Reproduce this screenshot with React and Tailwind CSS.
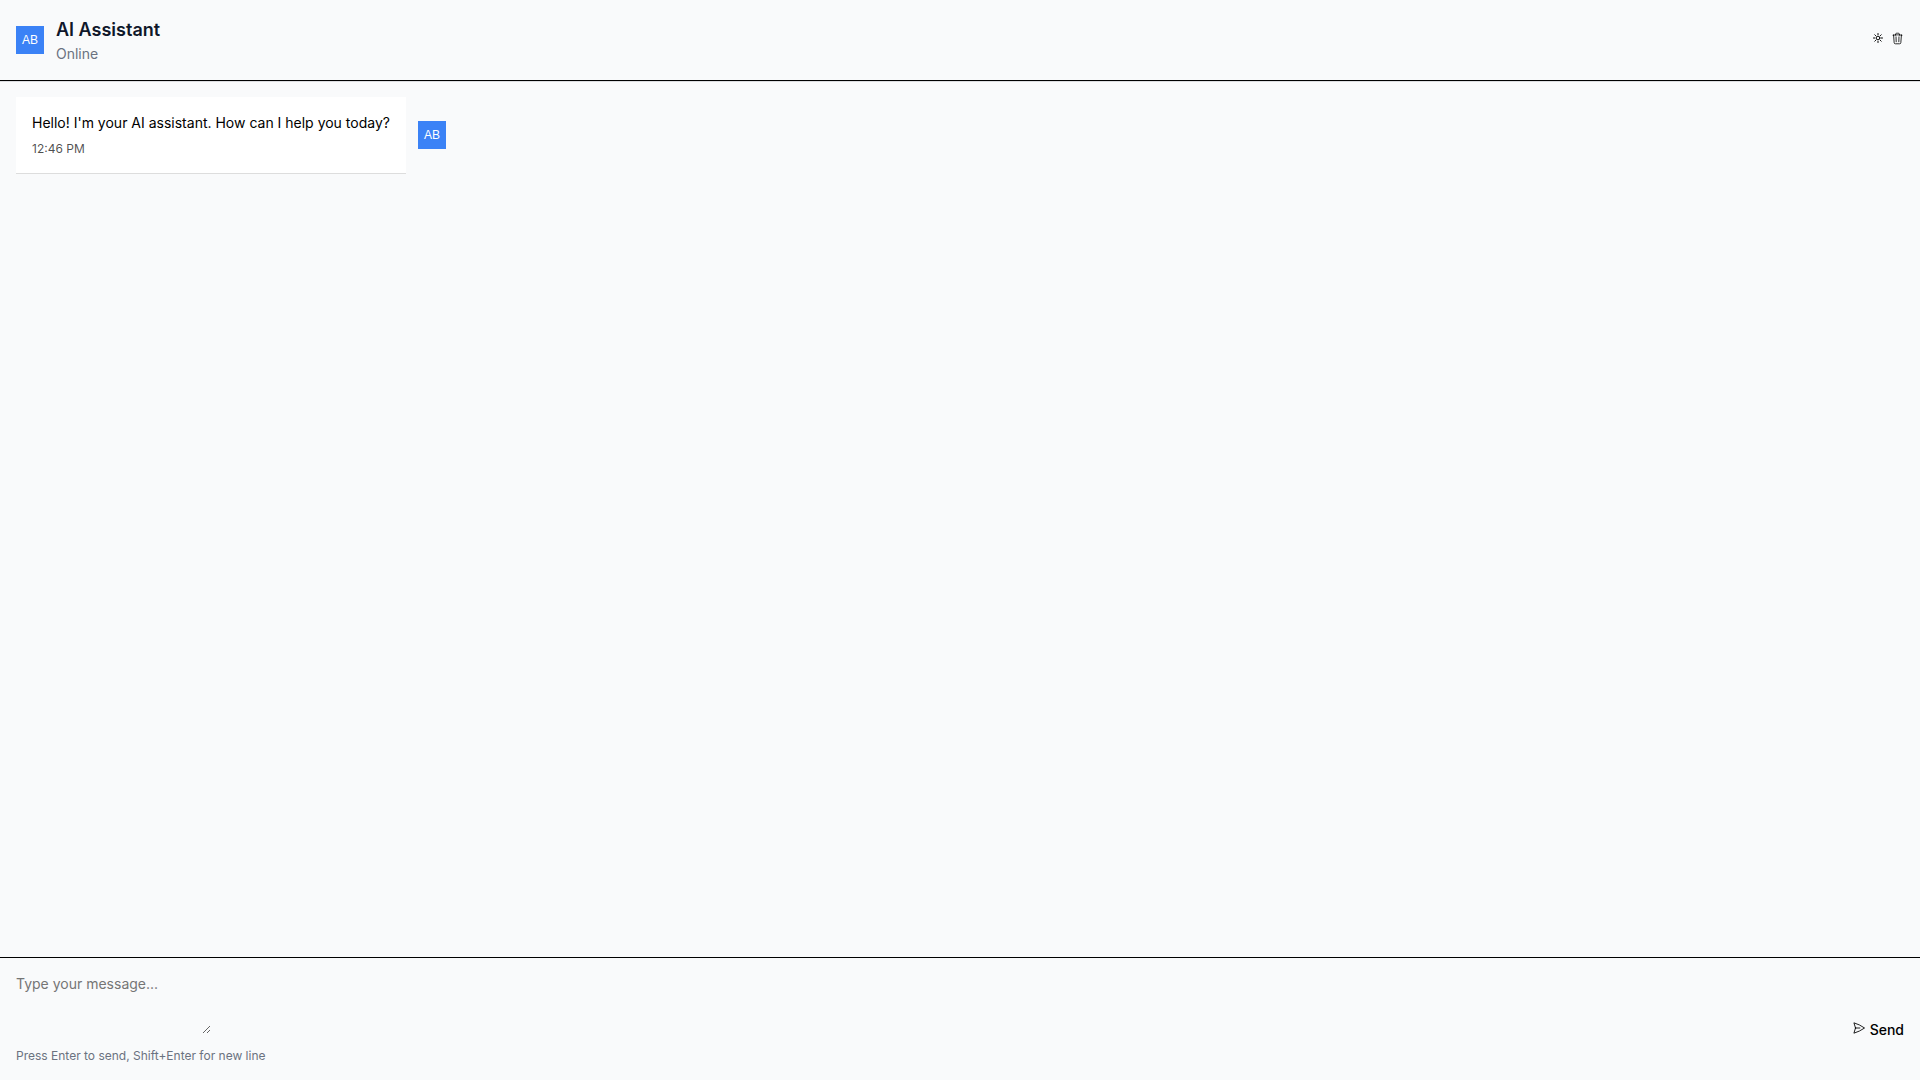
import React, { useState } from 'react';
import { HiOutlinePaperAirplane, HiOutlineSun, HiOutlineTrash } from 'react-icons/hi2';

const Avatar = () => (
  <div className="flex size-7 shrink-0 items-center justify-center bg-[#3b82f6] font-['Liberation_Sans',sans-serif] text-xs text-white">
    AB
  </div>
);

const ChatHeader = () => (
  <header className="flex items-center justify-between border-b border-black p-4 shadow-[0_1px_0_#dcdde0]">
    <div className="flex items-center gap-3">
      <Avatar />
      <div>
        <h1 className="text-lg leading-7 font-semibold text-[#0f172a]">AI Assistant</h1>
        <p className="text-sm leading-5 text-[#6b7280]">Online</p>
      </div>
    </div>
    <div className="flex items-center gap-[7px] pb-1">
      <button type="button" aria-label="Toggle theme" className="cursor-pointer">
        <HiOutlineSun className="size-3 stroke-2" />
      </button>
      <button type="button" aria-label="Clear chat" className="cursor-pointer">
        <HiOutlineTrash className="size-[13px]" />
      </button>
    </div>
  </header>
);

const Message = ({ text, time }) => (
  <div className="flex items-center gap-3">
    <div className="bg-white p-4 shadow-[0_1px_0_#dddddd]">
      <p className="text-sm">{text}</p>
      <p className="mt-2 text-xs text-black/70">{time}</p>
    </div>
    <Avatar />
  </div>
);

const ChatInput = () => {
  const [message, setMessage] = useState('');

  return (
    <footer className="border-t border-black p-4">
      <div className="flex items-end justify-between">
        <textarea
          value={message}
          onChange={(e) => setMessage(e.target.value)}
          rows={3}
          placeholder="Type your message..."
          aria-label="Message"
          className="mb-1.5 text-sm outline-none placeholder:text-[#757575]"
        />
        <button type="button" className="flex cursor-pointer items-center gap-1 text-sm font-medium">
          <HiOutlinePaperAirplane className="mb-1 size-3.5" />
          Send
        </button>
      </div>
      <p className="mt-2 text-xs text-[#6b7280]">Press Enter to send, Shift+Enter for new line</p>
    </footer>
  );
};

const App = () => (
  <div className="flex h-screen flex-col bg-[#f9fafb] font-['Inter',sans-serif] text-black">
    <ChatHeader />
    <main className="flex-1 overflow-y-auto p-4">
      <Message text="Hello! I'm your AI assistant. How can I help you today?" time="12:46 PM" />
    </main>
    <ChatInput />
  </div>
);

export default App;
